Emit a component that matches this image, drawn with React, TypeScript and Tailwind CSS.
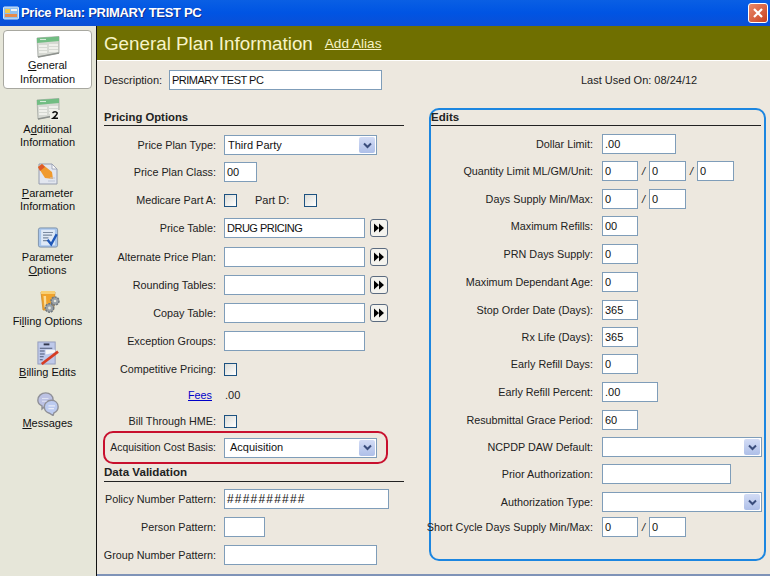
import React from "react";

const FONT = "font-['Liberation_Sans',sans-serif]";

function Label({ children, w }: { children: React.ReactNode; w: string }) {
  return <div className={`${w} shrink-0 flex justify-end whitespace-nowrap text-[10.8px]`}>{children}</div>;
}

function Box({ w, value = "" }: { w: string; value?: React.ReactNode }) {
  return (
    <div className={`${w} h-[20px] shrink-0 bg-white border border-[#7f9db9] pl-[2px] flex items-center whitespace-nowrap overflow-hidden text-[#111]`}>
      {value}
    </div>
  );
}

function Arrow() {
  return (
    <div className="w-[16px] h-[16px] bg-gradient-to-b from-[#d3dcf5] to-[#aebfe8] rounded-[2px] flex items-center justify-center">
      <svg width="9" height="7" viewBox="0 0 9 7">
        <path d="M1 1.5 L4.5 5 L8 1.5" fill="none" stroke="#3a4d7c" strokeWidth="2" />
      </svg>
    </div>
  );
}

function Select({ w, value = "", indent = "pl-[3px]" }: { w: string; value?: string; indent?: string }) {
  return (
    <div className={`${w} ${indent} h-[20px] shrink-0 bg-white border border-[#7f9db9] pr-px flex items-center justify-between text-[#111]`}>
      <span>{value}</span>
      <Arrow />
    </div>
  );
}

function Check() {
  return <div className="w-[13px] h-[13px] shrink-0 border border-[#1c5180] bg-gradient-to-br from-[#dcdcd7] to-white" />;
}

function Jump() {
  return (
    <div className="w-[18px] h-[18px] ml-[5px] shrink-0 bg-[#f4f3ee] border border-[#5b6b80] rounded-[3px] flex items-center justify-center">
      <svg width="12" height="10" viewBox="0 0 12 10">
        <path d="M1 0.5 L6 5 L1 9.5 Z M6 0.5 L11 5 L6 9.5 Z" fill="#000" />
      </svg>
    </div>
  );
}

function Slash() {
  return <div className="w-[11px] shrink-0 text-center italic">/</div>;
}

function Row({ mt, label, children, w = "w-[112px]", gap = "gap-[8px]" }: { mt: string; label: React.ReactNode; children: React.ReactNode; w?: string; gap?: string }) {
  return (
    <div className={`${mt} h-[20px] flex items-center ${gap}`}>
      <Label w={w}>{label}</Label>
      {children}
    </div>
  );
}

function EditRow({ mt, label, children }: { mt: string; label: React.ReactNode; children: React.ReactNode }) {
  return (
    <Row mt={mt} label={label} w="w-[162px]" gap="gap-[9px]">
      {children}
    </Row>
  );
}

function CardIcon({ two = false }: { two?: boolean }) {
  return (
    <svg width="24" height="22" viewBox="0 0 24 22">
      <path d="M1 2 L23 0.5 V17 L2 21 Z" fill="#d6d9d3" stroke="#a4a8a3" strokeWidth="0.8" />
      <path d="M1 2 L23 0.5 V5 L1 7 Z" fill="#72bd83" />
      <path d="M4 3.5 H10" stroke="#d5ecd9" strokeWidth="1.1" />
      <path d="M3 10 H11 M3 13 H11 M3 16 H11 M13 9 H22 M13 12 H22 M13 15 H22" stroke="#f7f7f4" strokeWidth="1.5" />
      <path d="M2 21 L23 17" stroke="#8d918d" strokeWidth="1.4" />
      {two && <rect x="14" y="12" width="10" height="10" fill="#f1f1ea" />}
      {two && <path d="M16.5 14.8 Q19.5 12.6 21.2 15 Q21 17 17 20.3 H22" fill="none" stroke="#111" strokeWidth="1.6" />}
    </svg>
  );
}

function ParamInfoIcon() {
  return (
    <svg width="21" height="22" viewBox="0 0 21 22">
      <path d="M2 1 H15 L20 6 V21 H2 Z" fill="#e2e6ef" stroke="#959cae" />
      <path d="M15 1 V6 H20 Z" fill="#fafafa" stroke="#959cae" strokeWidth="0.8" />
      <path d="M1 4 L5 1 L15 9 L16 16 L8 15 Z" fill="#f09a2e" />
      <path d="M1 4 L5 1 L8 4 L3 8 Z" fill="#dd5a2a" />
      <path d="M11 18 H18 M13 15 H18" stroke="#bcc4d6" strokeWidth="1.2" />
    </svg>
  );
}

function ParamOptionsIcon() {
  return (
    <svg width="22" height="21" viewBox="0 0 23 23">
      <rect x="1" y="1" width="21" height="21" rx="2" fill="#a8c6ec" stroke="#7a8fa8" />
      <rect x="4" y="3" width="15" height="17" fill="#dfe9f6" />
      <path d="M6 6 H17 M6 9 H16 M6 12 H12 M6 15 H11" stroke="#7a8aa0" strokeWidth="1.3" />
      <path d="M11 14 L15 19 L21 8" fill="none" stroke="#1f58b8" strokeWidth="2.6" />
    </svg>
  );
}

function FillingIcon() {
  return (
    <svg width="20" height="24" viewBox="0 0 20 24" className="ml-[5px]">
      <path d="M1 2 H15 L13.5 20 H3 Z" fill="#f0a32c" stroke="#cf8a26" strokeWidth="0.8" />
      <path d="M1 1 H15 V4 H1 Z" fill="#f8cf74" />
      <path d="M3.5 6 H6 L6.5 18 H4.5 Z" fill="#fbdc96" />
      <circle cx="15" cy="11" r="4" fill="#9aa2a8" stroke="#6f777d" strokeDasharray="2 1" strokeWidth="1.5" />
      <circle cx="15" cy="11" r="1.3" fill="#e6e6d9" />
      <circle cx="9.5" cy="18" r="4.2" fill="#9aa2a8" stroke="#6f777d" strokeDasharray="2 1" strokeWidth="1.5" />
      <circle cx="9.5" cy="18" r="1.4" fill="#e6e6d9" />
    </svg>
  );
}

function BillingIcon() {
  return (
    <svg width="23" height="24" viewBox="0 0 24 25">
      <rect x="2" y="1" width="18" height="23" fill="#bec9ea" stroke="#939cbc" />
      <path d="M8 3.5 H14" stroke="#33384f" strokeWidth="2" />
      <path d="M4 7.5 H17 M4 10.5 H9 M4 13.5 H9 M4 16.5 H8 M4 19.5 H7" stroke="#4d5877" strokeWidth="1.1" />
      <path d="M10 9 H20 V12 L10 14 Z" fill="#f6f6f6" />
      <path d="M6 24 L23 11" stroke="#d63d24" strokeWidth="2.8" />
    </svg>
  );
}

function MessagesIcon() {
  return (
    <svg width="24" height="24" viewBox="0 0 25 26">
      <path d="M1.5 9 C1.5 4 5.5 1 10 1 C14.5 1 18 4 18 8.5 C18 12.5 14 15.5 9.5 15.5 L6 18.5 L6 15 C3.5 14 1.5 12 1.5 9 Z" fill="#bcc2e4" stroke="#8f9098" strokeWidth="1.5" />
      <path d="M8.5 16 C8.5 12 12 9 16 9 C20.5 9 23.5 12 23.5 16 C23.5 19 21.5 21.5 19 22.5 L18 25.5 L14 23 C10.5 22 8.5 19 8.5 16 Z" fill="#bccbf0" stroke="#8f9098" strokeWidth="1.5" />
      <path d="M13 15 H20 M13 18 H19" stroke="#e8ecf8" strokeWidth="1.2" />
      <path d="M6 7 H13 M6 10 H11" stroke="#dfe2f2" strokeWidth="1.2" />
    </svg>
  );
}

function NavItem({ mt, gap, icon, lines }: { mt: string; gap: string; icon: React.ReactNode; lines: React.ReactNode[] }) {
  return (
    <div className={`${mt} flex flex-col items-center`}>
      {icon}
      <div className={`${gap} text-center leading-[13px] text-[#111] whitespace-nowrap`}>
        {lines.map((l, i) => (
          <div key={i}>{l}</div>
        ))}
      </div>
    </div>
  );
}

export default function App() {
  return (
    <div className={`${FONT} w-[770px] h-[576px] overflow-hidden flex flex-col text-[11px] text-[#222] bg-[#ede8df]`}>
      {/* TITLE BAR */}
      <div className="h-[26px] shrink-0 bg-gradient-to-b from-[#0a5fe4] via-[#0054e3] to-[#0a4fd6] flex items-center pl-[3px] pr-[2px]">
        <svg width="16" height="16" viewBox="0 0 16 16">
          <rect x="0.5" y="2" width="15" height="12" rx="1" fill="#8fc0f0" stroke="#d8e8f8" />
          <rect x="2" y="4" width="5" height="4" fill="#f1c84c" />
          <rect x="8" y="4" width="6" height="2" fill="#f2f2f2" />
          <rect x="2" y="9" width="12" height="3" fill="#e88a4a" />
        </svg>
        <div className="ml-[2px] text-[13px] tracking-[-0.3px] font-bold text-white [text-shadow:1px_1px_#0f2f90] whitespace-nowrap">
          Price Plan: PRIMARY TEST PC
        </div>
        <div className="ml-auto w-[20px] h-[20px] rounded-[3px] border border-white bg-gradient-to-br from-[#e8886a] to-[#c8401c] flex items-center justify-center">
          <svg width="12" height="12" viewBox="0 0 12 12">
            <path d="M2 2 L10 10 M10 2 L2 10" stroke="#fff" strokeWidth="2.2" />
          </svg>
        </div>
      </div>

      <div className="flex-1 flex min-h-0">
        {/* SIDEBAR */}
        <div className="w-[97px] shrink-0 bg-[#e6e6d9] border-r border-[#111] pl-[3px] pr-[4px] pt-[4px] flex flex-col">
          <div className="h-[59px] bg-white border border-[#a8a8a0] rounded-[4px] pt-[5px] flex flex-col items-center">
            <CardIcon />
            <div className="text-center leading-[14px] text-[#111]">
              <div><u>G</u>eneral</div>
              <div>Information</div>
            </div>
          </div>
          <NavItem mt="mt-[9px]" gap="mt-[3px]" icon={<CardIcon two />} lines={[<>A<u>d</u>ditional</>, "Information"]} />
          <NavItem mt="mt-[14px]" gap="mt-[2px]" icon={<ParamInfoIcon />} lines={[<><u>P</u>arameter</>, "Information"]} />
          <NavItem mt="mt-[14px]" gap="mt-[3px]" icon={<ParamOptionsIcon />} lines={["Parameter", <><u>O</u>ptions</>]} />
          <NavItem mt="mt-[13px]" gap="mt-[1px]" icon={<FillingIcon />} lines={[<>Fi<u>l</u>ling Options</>]} />
          <NavItem mt="mt-[13px]" gap="mt-[1px]" icon={<BillingIcon />} lines={[<><u>B</u>illing Edits</>]} />
          <NavItem mt="mt-[13px]" gap="mt-[1px]" icon={<MessagesIcon />} lines={[<><u>M</u>essages</>]} />
        </div>

        {/* MAIN */}
        <div className="flex-1 flex flex-col min-w-0">
          <div className="h-[35px] shrink-0 bg-[#6f6f00] flex items-center pl-[7px] border-b border-white">
            <span className="text-[18.8px] text-[#f7f4c8] translate-y-px">General Plan Information</span>
            <span className="ml-[12px] text-[13.6px] text-[#f7f4c8] underline translate-y-px">Add Alias</span>
          </div>

          <div className="flex-1 pl-[7px] border-b-2 border-[#7f93b8] min-h-0">
            <div className="h-[20px] mt-[9px] flex items-center">
              <div className="w-[65px]">Description:</div>
              <Box w="w-[213px]" value={<span className="tracking-[-0.5px]">PRIMARY TEST PC</span>} />
              <div className="ml-[199px]">Last Used On: 08/24/12</div>
            </div>

            <div className="mt-[18px] flex">
              {/* LEFT COLUMN */}
              <div className="w-[300px] shrink-0">
                <div className="font-bold text-[11.3px] leading-[18px] border-b border-[#222] h-[18px]">Pricing Options</div>
                <Row mt="mt-[9px]" label="Price Plan Type:"><Select w="w-[153px]" value="Third Party" /></Row>
                <Row mt="mt-[7px]" label="Price Plan Class:"><Box w="w-[33px]" value="00" /></Row>
                <Row mt="mt-[8px]" label="Medicare Part A:">
                  <Check />
                  <span className="ml-[10px]">Part D:</span>
                  <span className="ml-[7px]"><Check /></span>
                </Row>
                <Row mt="mt-[8px]" label="Price Table:"><div className="flex items-center"><Box w="w-[141px]" value={<span className="tracking-[-0.5px]">DRUG PRICING</span>} /><Jump /></div></Row>
                <Row mt="mt-[9px]" label="Alternate Price Plan:"><div className="flex items-center"><Box w="w-[141px]" /><Jump /></div></Row>
                <Row mt="mt-[8px]" label="Rounding Tables:"><div className="flex items-center"><Box w="w-[141px]" /><Jump /></div></Row>
                <Row mt="mt-[8px]" label="Copay Table:"><div className="flex items-center"><Box w="w-[141px]" /><Jump /></div></Row>
                <Row mt="mt-[8px]" label="Exception Groups:"><Box w="w-[141px]" /></Row>
                <Row mt="mt-[8px]" label="Competitive Pricing:"><Check /></Row>
                <Row mt="mt-[6px]" label={<span className="text-[#0000c8] underline mr-[4px]">Fees</span>}><span className="ml-[1px]">.00</span></Row>
                <Row mt="mt-[6px]" label="Bill Through HME:"><Check /></Row>
                <div className="-ml-px w-[285px] h-[33px] border-2 border-[#c8102e] rounded-[10px] flex items-center gap-[8px]">
                  <Label w="w-[111px]"><span className="text-[10.4px]">Acquisition Cost Basis:</span></Label>
                  <Select w="w-[153px]" value="Acquisition" indent="pl-[5px]" />
                </div>
                <div className="font-bold text-[11.6px] leading-[16px] border-b border-[#222] h-[18px]">Data Validation</div>
                <Row mt="mt-[7px]" label="Policy Number Pattern:"><Box w="w-[165px]" value={<span className="text-[12px] tracking-[1.2px]">##########</span>} /></Row>
                <Row mt="mt-[8px]" label="Person Pattern:"><Box w="w-[41px]" /></Row>
                <Row mt="mt-[8px]" label="Group Number Pattern:"><Box w="w-[153px]" /></Row>
              </div>

              {/* EDITS */}
              <div className="ml-[25px] w-[337px] h-[453px] border-2 border-[#1c86e0] rounded-[10px]">
                <div className="mr-[3px] font-bold text-[11.5px] leading-[14px] h-[16px] border-b border-[#222]">Edits</div>
                <EditRow mt="mt-[8px]" label="Dollar Limit:"><Box w="w-[74px]" value=".00" /></EditRow>
                <EditRow mt="mt-[7px]" label="Quantity Limit ML/GM/Unit:">
                  <div className="flex items-center"><Box w="w-[36px]" value="0" /><Slash /><Box w="w-[37px]" value="0" /><Slash /><Box w="w-[37px]" value="0" /></div>
                </EditRow>
                <EditRow mt="mt-[8px]" label="Days Supply Min/Max:">
                  <div className="flex items-center"><Box w="w-[36px]" value="0" /><Slash /><Box w="w-[37px]" value="0" /></div>
                </EditRow>
                <EditRow mt="mt-[7px]" label="Maximum Refills:"><Box w="w-[36px]" value="00" /></EditRow>
                <EditRow mt="mt-[8px]" label="PRN Days Supply:"><Box w="w-[36px]" value="0" /></EditRow>
                <EditRow mt="mt-[8px]" label="Maximum Dependant Age:"><Box w="w-[36px]" value="0" /></EditRow>
                <EditRow mt="mt-[8px]" label="Stop Order Date (Days):"><Box w="w-[36px]" value="365" /></EditRow>
                <EditRow mt="mt-[7px]" label="Rx Life (Days):"><Box w="w-[36px]" value="365" /></EditRow>
                <EditRow mt="mt-[7px]" label="Early Refill Days:"><Box w="w-[36px]" value="0" /></EditRow>
                <EditRow mt="mt-[8px]" label="Early Refill Percent:"><Box w="w-[56px]" value=".00" /></EditRow>
                <EditRow mt="mt-[8px]" label="Resubmittal Grace Period:"><Box w="w-[36px]" value="60" /></EditRow>
                <EditRow mt="mt-[7px]" label="NCPDP DAW Default:"><Select w="w-[160px]" /></EditRow>
                <EditRow mt="mt-[7px]" label="Prior Authorization:"><Box w="w-[129px]" /></EditRow>
                <EditRow mt="mt-[8px]" label="Authorization Type:"><Select w="w-[160px]" /></EditRow>
                <EditRow mt="mt-[5px]" label="Short Cycle Days Supply Min/Max:">
                  <div className="flex items-center"><Box w="w-[36px]" value="0" /><Slash /><Box w="w-[37px]" value="0" /></div>
                </EditRow>
              </div>
            </div>
          </div>
        </div>
      </div>
    </div>
  );
}
